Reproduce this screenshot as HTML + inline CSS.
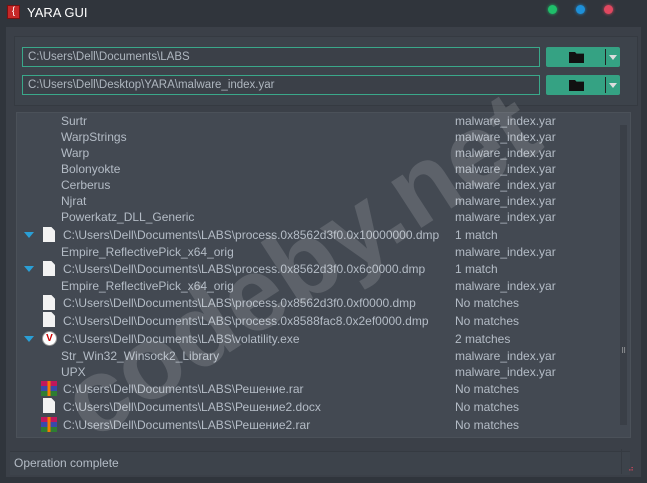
<!DOCTYPE html>
<html style="overflow:hidden;width:647px;height:483px"><head><meta charset="utf-8"><style>
*{margin:0;padding:0;box-sizing:border-box}
body{width:647px;height:483px;background:#30353c;font-family:"Liberation Sans","DejaVu Sans",sans-serif;font-size:12px;color:#b4bcc6;position:relative;overflow:hidden}
.a{position:absolute;white-space:nowrap}
.main{left:6px;top:27px;width:635px;height:450px;background:#3b4048}
.grp{left:14px;top:36px;width:624px;height:70px;border:1px solid #353a41;background:#3d434b}
.inp{left:22px;width:518px;height:20px;border:1px solid #3aa88a;background:#3b4048;color:#aeb6bf;padding:3px 0 0 5px;font-size:11.5px}
.btn{left:546px;width:74px;height:20px;background:#35a283;border-radius:2px}
.tree{left:16px;top:112px;width:615px;height:326px;border:1px solid #4b5159;background:#434952}
.r{position:absolute;white-space:nowrap}
.tri{position:absolute;left:24px;width:0;height:0;border-left:5px solid transparent;border-right:5px solid transparent;border-top:6px solid #2a9fd6}
.doc{position:absolute;left:43px;width:12px;height:15px;background:#f2f2f2;clip-path:polygon(0 0,70% 0,100% 25%,100% 100%,0 100%)}
.rar{position:absolute;left:41px;width:16px;height:15px;background:linear-gradient(90deg,transparent 40%,#f57c00 40% 60%,transparent 60%),linear-gradient(#c2185b 0 33%,#3949ab 33% 66%,#2e7d32 66%)}
.status{left:10px;top:451px;width:620px;height:24px;background:#3d434b;border-top:1px solid #353a41;padding:4px 0 0 4px}
.fold{position:absolute;left:569px;width:15px;height:11px;background:#111;clip-path:polygon(0 0,40% 0,50% 15%,100% 15%,100% 100%,0 100%)}
</style></head><body>
<div class="a" style="left:7px;top:5px;width:13px;height:14px;background:#c62828;border:1px solid #7a1010;color:#fff;font-size:10px;line-height:12px;text-align:center">{</div>
<div class="a" style="left:27px;top:5px;color:#fff;font-size:13px">YARA GUI</div>
<div class="a" style="left:548px;top:5px;width:9px;height:9px;border-radius:50%;background:#1fbf6a;box-shadow:0 0 3px #1fbf6a"></div>
<div class="a" style="left:576px;top:5px;width:9px;height:9px;border-radius:50%;background:#1e90d8;box-shadow:0 0 3px #1e90d8"></div>
<div class="a" style="left:604px;top:5px;width:9px;height:9px;border-radius:50%;background:#e04860;box-shadow:0 0 3px #e04860"></div>
<div class="a main"></div>
<div class="a grp"></div>
<div class="a inp" style="top:47px">C:\Users\Dell\Documents\LABS</div>
<div class="a inp" style="top:75px">C:\Users\Dell\Desktop\YARA\malware_index.yar</div>
<div class="a btn" style="top:47px"></div><div class="a btn" style="top:75px"></div>
<div class="fold" style="top:52px"></div>
<div class="fold" style="top:80px"></div>
<div class="a" style="left:605px;top:49px;width:1px;height:16px;background:#222"></div>
<div class="a" style="left:605px;top:77px;width:1px;height:16px;background:#222"></div>
<div class="a" style="left:609px;top:55px;border-left:4px solid transparent;border-right:4px solid transparent;border-top:5px solid #ddd"></div>
<div class="a" style="left:609px;top:83px;border-left:4px solid transparent;border-right:4px solid transparent;border-top:5px solid #ddd"></div>
<div class="a tree"></div>
<div class="a" style="left:620px;top:125px;width:7px;height:300px;background:#3a3f47"></div>
<div class="a" style="left:621px;top:350px;color:#ccc;font-size:7px;line-height:4px">⠿</div>
<div class="a" style="left:0;top:0;width:647px;height:483px">
<div class="r" style="left:61px;top:114px">Surtr</div><div class="r" style="left:455px;top:114px">malware_index.yar</div>
<div class="r" style="left:61px;top:130px">WarpStrings</div><div class="r" style="left:455px;top:130px">malware_index.yar</div>
<div class="r" style="left:61px;top:146px">Warp</div><div class="r" style="left:455px;top:146px">malware_index.yar</div>
<div class="r" style="left:61px;top:162px">Bolonyokte</div><div class="r" style="left:455px;top:162px">malware_index.yar</div>
<div class="r" style="left:61px;top:178px">Cerberus</div><div class="r" style="left:455px;top:178px">malware_index.yar</div>
<div class="r" style="left:61px;top:194px">Njrat</div><div class="r" style="left:455px;top:194px">malware_index.yar</div>
<div class="r" style="left:61px;top:210px">Powerkatz_DLL_Generic</div><div class="r" style="left:455px;top:210px">malware_index.yar</div>
<div class="tri" style="top:232px"></div><div class="doc" style="top:227px"></div>
<div class="r" style="left:63px;top:228px">C:\Users\Dell\Documents\LABS\process.0x8562d3f0.0x10000000.dmp</div><div class="r" style="left:455px;top:228px">1 match</div>
<div class="r" style="left:61px;top:245px">Empire_ReflectivePick_x64_orig</div><div class="r" style="left:455px;top:245px">malware_index.yar</div>
<div class="tri" style="top:266px"></div><div class="doc" style="top:261px"></div>
<div class="r" style="left:63px;top:262px">C:\Users\Dell\Documents\LABS\process.0x8562d3f0.0x6c0000.dmp</div><div class="r" style="left:455px;top:262px">1 match</div>
<div class="r" style="left:61px;top:279px">Empire_ReflectivePick_x64_orig</div><div class="r" style="left:455px;top:279px">malware_index.yar</div>
<div class="doc" style="top:295px"></div>
<div class="r" style="left:63px;top:296px">C:\Users\Dell\Documents\LABS\process.0x8562d3f0.0xf0000.dmp</div><div class="r" style="left:455px;top:296px">No matches</div>
<div class="doc" style="top:312px"></div>
<div class="r" style="left:63px;top:314px">C:\Users\Dell\Documents\LABS\process.0x8588fac8.0x2ef0000.dmp</div><div class="r" style="left:455px;top:314px">No matches</div>
<div class="tri" style="top:336px"></div>
<div class="a" style="left:42px;top:331px;width:15px;height:15px;border-radius:50%;background:#fff;border:1px solid #999;color:#c00;font-size:10px;font-weight:bold;text-align:center;line-height:13px">V</div>
<div class="r" style="left:63px;top:332px">C:\Users\Dell\Documents\LABS\volatility.exe</div><div class="r" style="left:455px;top:332px">2 matches</div>
<div class="r" style="left:61px;top:349px">Str_Win32_Winsock2_Library</div><div class="r" style="left:455px;top:349px">malware_index.yar</div>
<div class="r" style="left:61px;top:365px">UPX</div><div class="r" style="left:455px;top:365px">malware_index.yar</div>
<div class="rar" style="top:381px"></div>
<div class="r" style="left:63px;top:382px">C:\Users\Dell\Documents\LABS\Решение.rar</div><div class="r" style="left:455px;top:382px">No matches</div>
<div class="doc" style="top:398px"></div>
<div class="r" style="left:63px;top:400px">C:\Users\Dell\Documents\LABS\Решение2.docx</div><div class="r" style="left:455px;top:400px">No matches</div>
<div class="rar" style="top:417px"></div>
<div class="r" style="left:63px;top:418px">C:\Users\Dell\Documents\LABS\Решение2.rar</div><div class="r" style="left:455px;top:418px">No matches</div>
</div>
<div class="a status">Operation complete</div>
<div class="a" style="left:621px;top:449px;width:1px;height:25px;background:#353a41"></div>
<div class="a" style="left:628px;top:464px;color:#e04860;font-size:8px">⠴</div>
<div class="a" style="left:-50px;top:210px;width:700px;transform:rotate(-33deg);font-size:104px;font-weight:bold;color:rgba(255,255,255,0.14);text-align:center;line-height:110px">codeby.net</div>
</body></html>
